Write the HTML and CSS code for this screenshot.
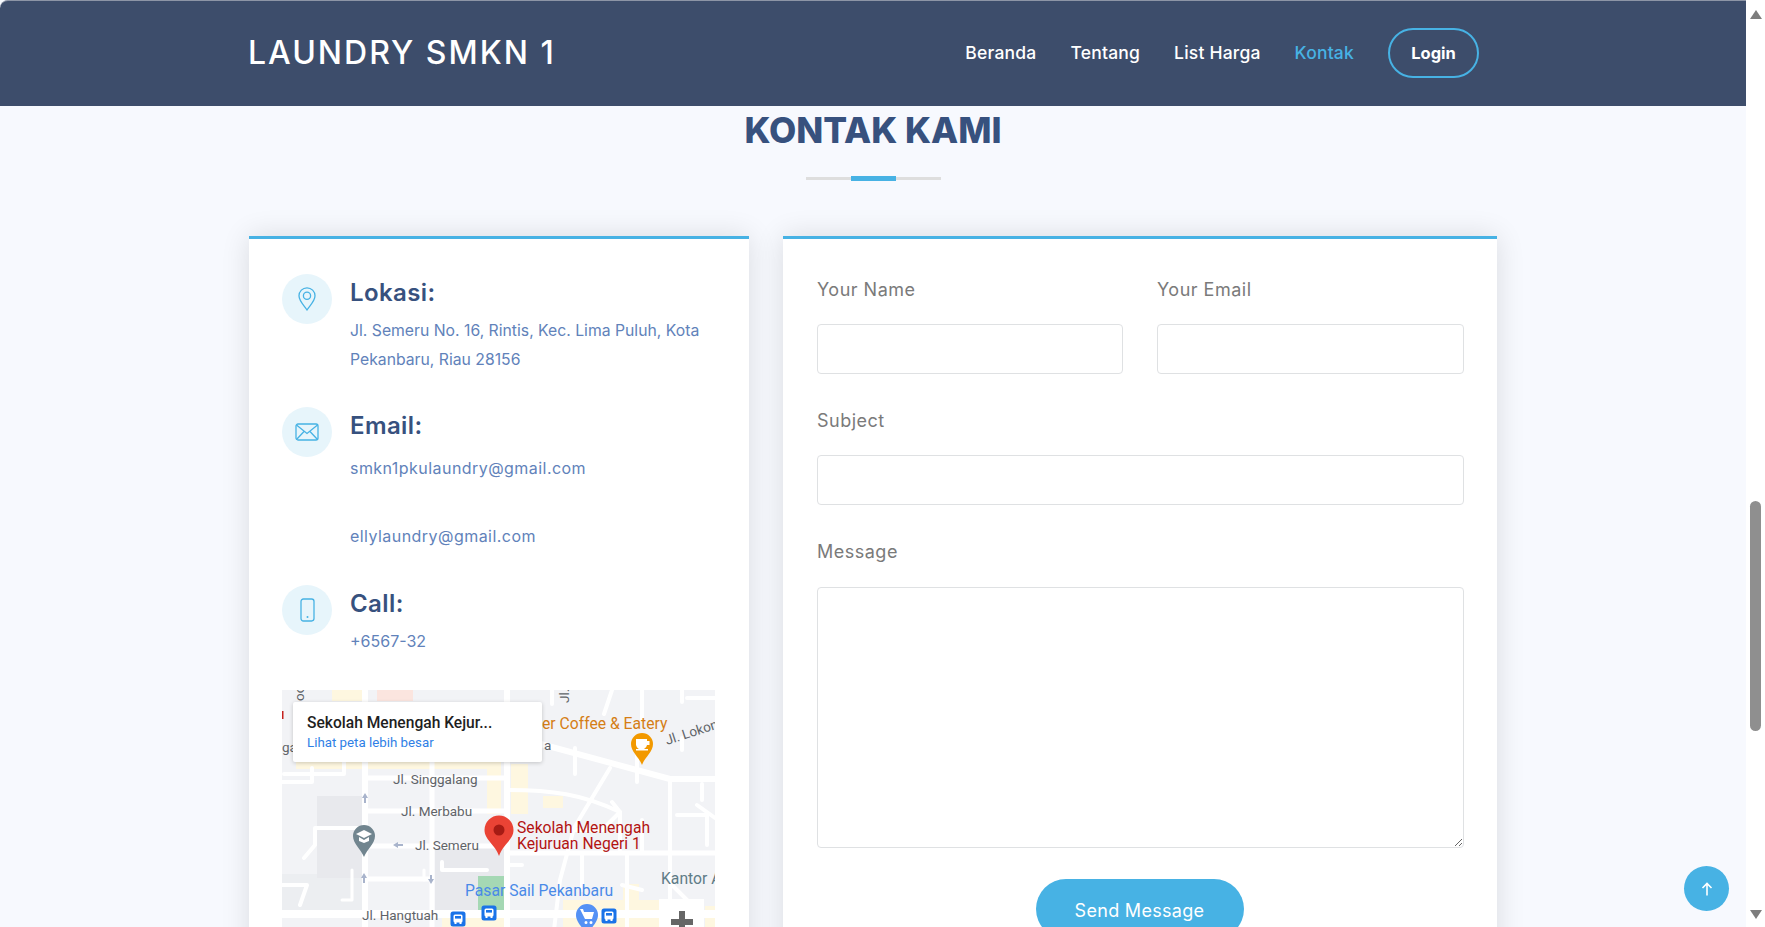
FILE: index.html
```html
<!DOCTYPE html>
<html lang="id">
<head>
<meta charset="utf-8">
<title>Laundry SMKN 1</title>
<link rel="stylesheet" href="styles.css">
</head>
<body>
<div class="page">
  <header class="topbar">
    <div class="topbar-inner">
      <a class="logo">LAUNDRY SMKN 1</a>
      <nav class="nav">
        <a>Beranda</a>
        <a>Tentang</a>
        <a>List Harga</a>
        <a class="active">Kontak</a>
        <a class="login">Login</a>
      </nav>
    </div>
  </header>
  <main class="contact">
    <h2 class="title">KONTAK KAMI</h2>
    <div class="divider"><span class="divider-bar"></span></div>
    <div class="columns">
      <section class="card info">
        <div class="item">
          <span class="icon">
            <svg viewBox="0 0 18 24" width="18" height="24"><path d="M9 23 C6 18.5 1 14 1 8.8 A8 8 0 0 1 17 8.8 C17 14 12 18.5 9 23Z"/><circle cx="9" cy="8.8" r="3.6"/></svg>
          </span>
          <div class="item-body">
            <h4>Lokasi:</h4>
            <p class="address">Jl. Semeru No. 16, Rintis, Kec. Lima Puluh, Kota Pekanbaru, Riau 28156</p>
          </div>
        </div>
        <div class="item">
          <span class="icon">
            <svg viewBox="0 0 24 18" width="24" height="18"><rect x="1" y="1" width="22" height="16" rx="2"/><path d="M1.5 2 L12 10.5 L22.5 2 M1.5 16.5 L9 8.5 M22.5 16.5 L15 8.5"/></svg>
          </span>
          <div class="item-body">
            <h4>Email:</h4>
            <p class="mail-first">smkn1pkulaundry@gmail.com</p>
            <p class="mail-second">ellylaundry@gmail.com</p>
          </div>
        </div>
        <div class="item">
          <span class="icon">
            <svg viewBox="0 0 15 24" width="15" height="24"><rect x="1" y="1" width="13" height="22" rx="2.4"/><circle class="dot" cx="7.5" cy="19" r="1"/></svg>
          </span>
          <div class="item-body">
            <h4>Call:</h4>
            <p class="phone">+6567-32</p>
          </div>
        </div>
        <div class="map">
          <svg class="map-art" viewBox="0 0 433 290" width="433" height="290">
            <defs>
              <g id="bus"><rect x="-7.5" y="-7.5" width="15" height="15" rx="2.5" fill="#1a73e8"/><rect x="-4.5" y="-4.5" width="9" height="8" rx="1.5" fill="#fff"/><rect x="-3" y="-3" width="6" height="2.6" fill="#1a73e8"/><rect x="-3.5" y="3" width="2" height="2" fill="#fff"/><rect x="1.5" y="3" width="2" height="2" fill="#fff"/></g>
            </defs>
            <rect width="433" height="290" fill="#f2f3f6"/>
            <g fill="#fef7e0">
              <rect x="50" width="30" height="11"/>
              <rect x="14" y="70" width="205" height="9"/>
              <rect x="205" y="74" width="14" height="50"/>
              <rect x="229" y="74" width="17" height="50"/>
              <rect x="261" y="106" width="20" height="12"/>
              <rect x="341" y="194" width="16" height="18"/>
              <rect x="281" y="210" width="98" height="30"/>
              <rect x="423" y="216" width="10" height="24"/>
              <rect x="160" y="228" width="65" height="12"/>
            </g>
            <rect x="95" width="36" height="11" fill="#fbe5df"/>
            <rect y="21" width="1.500" height="8" fill="#c5221f"/>
            <rect x="0" y="184" width="80" height="38" fill="#eceef1"/>
            <g fill="#e8e9ed">
              <rect x="35" y="106" width="45" height="82"/>
              <rect x="153" y="158" width="70" height="63"/>
            </g>
            <rect x="196" y="186" width="27" height="34" fill="#a5d8b4"/>
            <g fill="none" stroke="#fff" stroke-width="5" stroke-linecap="round" stroke-linejoin="round">
              <path stroke-width="6" d="M83 -4V244M225 -4V244"/>
              <path d="M150 66V244M83 88H225M83 121H225M83 156H225M225 163H436M83 189H150"/>
              <path stroke-width="8" d="M-4 224H436"/>
              <path stroke-width="6" d="M255 53L388 89H436"/>
              <path stroke-width="4" d="M225 100C270 100 300 104 338 122M328 78L292 138L278 190L272 240M388 89V240"/>
              <path stroke-width="4" d="M22 168L33 155V138H83M0 195H25L18 215M0 92H30V78M2 84H62V70"/>
              <path stroke-width="4" d="M345 163V240M300 163V200M240 175L225 175M205 180H160V172"/>
              <path stroke-width="4" d="M292 140H320L338 122L330 112M338 122V160M360 130V162M395 125H425V155M433 128L415 115"/>
              <path stroke-width="4" d="M270 0V14M330 0L322 24M360 0V30M400 0V12M433 8H405M293 58V84M355 66V92M400 48V60M420 110V94"/>
              <path stroke-width="4" d="M340 195L360 200M390 195L410 215"/>
              <path stroke-width="3" d="M70 180V210H60M142 180V190"/>
            </g>
            <g class="road-label">
              <text x="111" y="94">Jl. Singgalang</text>
              <text x="119" y="126">Jl. Merbabu</text>
              <text x="133" y="160">Jl. Semeru</text>
              <text x="80" y="230">Jl. Hangtuah</text>
              <text x="262" y="60">a</text>
              <text x="0" y="62">ga</text>
              <text x="21" y="246" class="fade">Hari</text>
              <text transform="translate(22 11) rotate(-90)">oo</text>
              <text transform="translate(287 13) rotate(-90)">Jl.</text>
              <text transform="translate(385 55) rotate(-18)">Jl. Lokon</text>
            </g>
            <g fill="#a9b4cc"><path d="M111 155l5-3v2h5v2h-5v2z"/><path d="M83 103l3 5h-2v5h-2v-5h-2z"/><path d="M82 183l3 5h-2v5h-2v-5h-2z"/><path d="M149 194l-3-5h2v-4h2v4h2z"/></g>
            <text class="poi coffee" x="260" y="39">er Coffee &amp; Eatery</text>
            <text class="poi market" x="183" y="206">Pasar Sail Pekanbaru</text>
            <text class="poi kantor" x="379" y="194">Kantor A</text>
            <text class="poi school" x="235" y="143">Sekolah Menengah</text>
            <text class="poi school" x="235" y="159">Kejuruan Negeri 1</text>
            <path fill="#f29900" d="M360 75C357 67 349 62 349 54A11 11 0 0 1 371 54C371 62 363 67 360 75Z"/>
            <path fill="#fff" d="M354 49H365V51H367.500V55H365A5.500 5.500 0 0 1 354 53ZM354 59H366V60.500H354Z"/>
            <path fill="#71858f" d="M82 167C79 159 71 154 71 146A11 11 0 0 1 93 146C93 154 85 159 82 167Z"/>
            <path fill="#fff" d="M82 140L90 144L82 148L74 144ZM77 147L82 150L87 147V151L82 153L77 151Z"/>
            <path fill="#5491f5" d="M305 246C302 238 294 233 294 225A11 11 0 0 1 316 225C316 233 308 238 305 246Z"/>
            <path fill="#fff" d="M298 219H301L302 222H312L310 229H303ZM304 231A1.500 1.500 0 1 0 304 234A1.500 1.500 0 1 0 304 231ZM309 231A1.500 1.500 0 1 0 309 234A1.500 1.500 0 1 0 309 231Z"/>
            <use href="#bus" x="176" y="229"/>
            <use href="#bus" x="207" y="223"/>
            <use href="#bus" x="327" y="226"/>
            <path fill="#ea4335" d="M217 166C213 154 202.500 150 202.500 140A14.500 14.500 0 0 1 231.500 140C231.500 150 221 154 217 166Z"/>
            <circle cx="217" cy="140" r="5.500" fill="#a61b14"/>
            <rect x="377" y="209" width="45" height="60" fill="#fff"/>
            <path fill="#666" d="M397 221H403V229H411V235H403V243H397V235H389V229H397Z"/>
          </svg>
          <div class="map-popup">
            <div class="map-name">Sekolah Menengah Kejur...</div>
            <a class="map-link">Lihat peta lebih besar</a>
          </div>
        </div>
      </section>
      <section class="card form-card">
        <form class="form">
          <div class="row-two">
            <div class="field">
              <label for="fname">Your Name</label>
              <input id="fname" type="text">
            </div>
            <div class="field">
              <label for="femail">Your Email</label>
              <input id="femail" type="email">
            </div>
          </div>
          <div class="field">
            <label for="fsubject">Subject</label>
            <input id="fsubject" type="text">
          </div>
          <div class="field field-message">
            <label for="fmessage">Message</label>
            <textarea id="fmessage"></textarea>
          </div>
          <div class="actions">
            <button type="button" class="send">Send Message</button>
          </div>
        </form>
      </section>
    </div>
  </main>
  <a class="to-top">
    <svg viewBox="0 0 16 16" width="16" height="16"><path d="M8 14.500V2.500M3.500 7L8 2.500L12.500 7"/></svg>
  </a>
</div>
<aside class="scrollbar">
  <span class="arrow-up"></span>
  <span class="thumb"></span>
  <span class="arrow-down"></span>
</aside>
</body>
</html>
```
FILE: styles.css
```css
* { box-sizing: border-box; }
html, body { margin: 0; height: 100%; overflow: hidden; }
body {
  display: flex;
  background: #fff;
  font-family: "Inter", "Liberation Sans", sans-serif;
}
.page {
  position: relative;
  flex: 1;
  height: 927px;
  overflow: hidden;
  background: #f7f9fe;
}
.topbar {
  height: 106px;
  background: #3d4d6b;
  border-top: 1px solid #8d95a6;
  border-top-left-radius: 8px;
  display: flex;
  align-items: center;
}
.topbar-inner {
  width: 1250px;
  margin: 0 auto;
  padding-right: 19px;
  display: flex;
  align-items: center;
  justify-content: space-between;
}
.logo {
  color: #fff;
  font-size: 32px;
  font-weight: 500;
  letter-spacing: 2px;
  line-height: 40px;
  margin-top: -2px;
}
.nav {
  display: flex;
  align-items: center;
  gap: 34px;
  color: #fff;
  font-size: 17.500px;
  letter-spacing: 0.2px;
  font-weight: 500;
  margin-top: -2px;
}
.nav .active { color: #47b2e4; }
.nav .login {
  width: 91px;
  height: 50px;
  border: 2px solid #47b2e4;
  border-radius: 25px;
  display: flex;
  align-items: center;
  justify-content: center;
  font-size: 16.500px;
  letter-spacing: 0;
  font-weight: 700;
}
.contact { display: flex; flex-direction: column; align-items: center; padding-top: 3px; }
.title {
  margin: 0 0 24px;
  font-size: 35.300px;
  line-height: 44px;
  font-weight: 800;
  color: #37517e;
}
.divider {
  width: 135px;
  height: 3px;
  background: #dedede;
  display: flex;
  align-items: center;
  justify-content: center;
  margin-bottom: 56px;
}
.divider-bar { width: 45px; height: 5px; background: #47b2e4; flex: none; }
.columns {
  width: 1248px;
  display: grid;
  grid-template-columns: 500px 714px;
  gap: 34px;
}
.card {
  background: #fff;
  border-top: 3px solid #47b2e4;
  box-shadow: 0 0 27px rgba(0, 0, 0, 0.12);
  height: 760px;
}
.info { padding: 35px 33px 0; }
.item {
  display: grid;
  grid-template-columns: 50px 1fr;
  column-gap: 18px;
  margin-bottom: 34px;
}
.icon {
  width: 50px;
  height: 50px;
  border-radius: 50%;
  background: #e7f5fb;
  display: flex;
  align-items: center;
  justify-content: center;
}
.icon svg { fill: none; stroke: #47b2e4; stroke-width: 1.300; }
.icon svg .dot { fill: #47b2e4; stroke: none; }
.item-body { padding-top: 4px; }
.item h4 {
  margin: 0 0 8px;
  font-size: 24px;
  letter-spacing: 0.4px;
  line-height: 30px;
  font-weight: 600;
  color: #37517e;
}
.item p {
  margin: 0;
  font-size: 16px;
  letter-spacing: 0.45px;
  line-height: 29px;
  color: #6182ba;
}
.item .address { font-size: 15.750px; letter-spacing: 0; margin-bottom: -1px; }
.item .phone { letter-spacing: 0; }
.item .mail-first { margin-top: 13px; }
.item .mail-second { margin-top: 39px; }
.map { position: relative; width: 433px; height: 290px; margin-top: 1px; overflow: hidden; }
.map-art { display: block; }
.map-art text { font-family: "Roboto", sans-serif; }
.road-label { font-size: 13.500px; fill: #5f6368; }
.road-label .fade { fill: #80868b; }
.poi { font-size: 15.700px; }
.coffee { fill: #d57e15; }
.market { fill: #4a8ae8; }
.kantor { fill: #5f7c87; }
.school { fill: #b31412; }
.map-popup {
  position: absolute;
  left: 11px;
  top: 12px;
  width: 249px;
  height: 60px;
  padding: 11px 14px;
  background: #fff;
  box-shadow: 0 1px 4px rgba(0, 0, 0, 0.2);
  border-radius: 2px;
  font-family: "Roboto", sans-serif;
}
.map-name { font-size: 15.600px; font-weight: 500; line-height: 20px; color: #1f1f1f; }
.map-link { display: block; font-size: 13.300px; line-height: 20px; color: #2f7fe6; }
.form { padding: 37px 33px 0 34px; display: flex; flex-direction: column; gap: 33px; }
.row-two { display: grid; grid-template-columns: 306px 307px; gap: 34px; }
.field { display: flex; flex-direction: column; gap: 21px; }
.field-message { gap: 22px; }
.field label {
  font-size: 18px;
  letter-spacing: 0.5px;
  line-height: 27px;
  color: #7a7a7a;
}
.field input, .field textarea {
  width: 100%;
  border: 1px solid #dfe1e3;
  border-radius: 4px;
  background: #fff;
  font: inherit;
  margin: 0;
  display: block;
  outline: none;
}
.field input { height: 50px; }
.field textarea { height: 261px; }
.actions { display: flex; justify-content: center; margin-top: -2px; padding-right: 2px; }
.send {
  width: 208px;
  height: 60px;
  border: 0;
  border-radius: 30px;
  background: #47b2e4;
  color: #fff;
  font-family: inherit;
  font-size: 18px;
  letter-spacing: 0.3px;
  padding: 2px 0 0;
}
.to-top {
  position: absolute;
  left: 1684px;
  top: 866px;
  width: 45px;
  height: 45px;
  border-radius: 50%;
  background: #47b2e4;
  display: flex;
  align-items: center;
  justify-content: center;
}
.to-top svg { fill: none; stroke: #fff; stroke-width: 1.600; }
.scrollbar {
  width: 19px;
  height: 927px;
  background: #fff;
  display: flex;
  flex-direction: column;
  align-items: center;
  padding: 10px 0 8px;
}
.arrow-up, .arrow-down {
  width: 0;
  height: 0;
  border-left: 6px solid transparent;
  border-right: 6px solid transparent;
}
.arrow-up { border-bottom: 9px solid #7d7d7d; }
.arrow-down { border-top: 9px solid #7d7d7d; margin-top: auto; }
.thumb {
  width: 11px;
  height: 230px;
  margin-top: 482px;
  border-radius: 6px;
  background: #8f8f8f;
}
```
